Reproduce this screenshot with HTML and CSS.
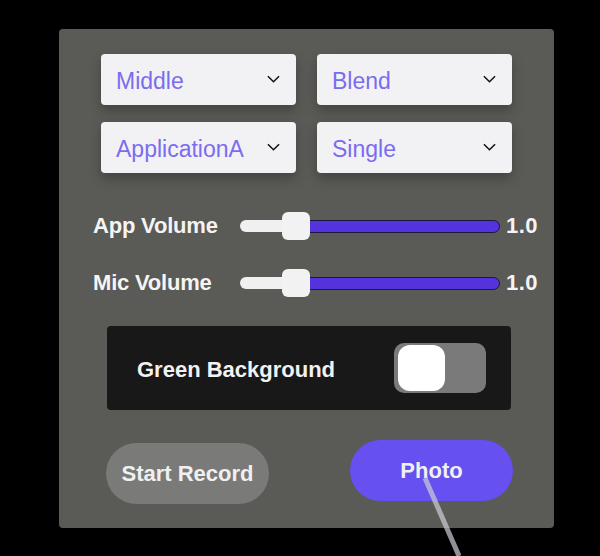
FILE: index.html
```html
<!DOCTYPE html>
<html lang="en">
<head>
    <meta charset="UTF-8" />
    <title>Capture Panel</title>
    <link rel="stylesheet" href="styles.css">
</head>
<body>
    <div class="panel">
        <div class="selects">
            <div class="select"><span>Middle</span><svg class="chev" viewBox="0 0 14 8"><path d="M1 1 L7 7 L13 1"/></svg></div>
            <div class="select"><span>Blend</span><svg class="chev" viewBox="0 0 14 8"><path d="M1 1 L7 7 L13 1"/></svg></div>
            <div class="select"><span>ApplicationA</span><svg class="chev" viewBox="0 0 14 8"><path d="M1 1 L7 7 L13 1"/></svg></div>
            <div class="select"><span>Single</span><svg class="chev" viewBox="0 0 14 8"><path d="M1 1 L7 7 L13 1"/></svg></div>
        </div>

        <div class="sliders">
            <div class="slider-row">
                <div class="slider-label">App Volume</div>
                <div class="track">
                    <div class="fill-left"></div>
                    <div class="thumb"></div>
                    <div class="fill-right"></div>
                </div>
                <div class="slider-value">1.0</div>
            </div>
            <div class="slider-row">
                <div class="slider-label">Mic Volume</div>
                <div class="track">
                    <div class="fill-left"></div>
                    <div class="thumb"></div>
                    <div class="fill-right"></div>
                </div>
                <div class="slider-value">1.0</div>
            </div>
        </div>

        <div class="toggle-card">
            <span>Green Background</span>
            <div class="toggle"><div class="knob"></div></div>
        </div>

        <div class="buttons">
            <button class="btn btn-gray">Start Record</button>
            <button class="btn btn-purple">Photo</button>
        </div>
    </div>

    <!-- controller pointer ray -->
    <svg class="ray" width="600" height="556" viewBox="0 0 600 556">
        <line x1="425" y1="478" x2="459" y2="556" />
    </svg>
</body>
</html>
```

FILE: styles.css
```css
body {
    margin: 0;
    background-color: #000000;
    font-family: "Liberation Sans", Arial, sans-serif;
    width: 600px;
    height: 556px;
    overflow: hidden;
    position: relative;
}

.panel {
    margin: 29px 0 0 59px;
    width: 495px;
    box-sizing: border-box;
    padding: 25px 41px 24px 42px;
    background-color: #5a5a56;
    border-radius: 4px;
}

.selects {
    display: grid;
    grid-template-columns: 195px 195px;
    column-gap: 21px;
    row-gap: 17px;
}

.select {
    height: 51px;
    box-sizing: border-box;
    background-color: #f2f2f4;
    border-radius: 4px;
    display: flex;
    align-items: center;
    justify-content: space-between;
    padding: 4px 16px 0 15px;
    box-shadow: 0 6px 12px rgba(0, 0, 0, 0.25);
    color: #7a6cf0;
    font-size: 23px;
}

.chev {
    width: 13px;
    height: 8px;
    margin-top: -5px;
}

.chev path {
    fill: none;
    stroke: #111111;
    stroke-width: 1.6;
}

.sliders {
    margin: 38px 0 0 -8px;
    width: 447px;
    display: flex;
    flex-direction: column;
    gap: 27px;
}

.slider-row {
    display: flex;
    align-items: center;
    height: 30px;
}

.slider-label {
    width: 147px;
    flex-shrink: 0;
    color: #f4f4f4;
    font-weight: bold;
    font-size: 22px;
    letter-spacing: -0.2px;
}

/* the track with thumb sitting inside */
.track {
    width: 260px;
    flex-shrink: 0;
    display: flex;
    align-items: center;
}

.fill-left {
    width: 44px;
    height: 12px;
    background-color: #f0f0f0;
    border-radius: 6px 0 0 6px;
}

.thumb {
    width: 28px;
    height: 28px;
    background-color: #f2f2f2;
    border-radius: 6px;
    margin: 0 -2px;
    position: relative;
    z-index: 1;
}

.fill-right {
    flex: 1;
    height: 11px;
    background-color: #5433dc;
    border: 1px solid #1c1640;
    border-radius: 0 7px 7px 0;
}

.slider-value {
    margin-left: 6px;
    color: #f4f4f4;
    font-weight: bold;
    font-size: 22px;
    letter-spacing: 0.4px;
}

.toggle-card {
    margin: 28px 0 0 6px;
    width: 404px;
    height: 84px;
    box-sizing: border-box;
    padding: 3px 25px 0 30px;
    background-color: #181818;
    border-radius: 4px;
    display: flex;
    align-items: center;
    justify-content: space-between;
    color: #f2f2f2;
    font-size: 22px;
    font-weight: bold;
}

.toggle {
    width: 92px;
    height: 50px;
    margin-top: -3px;
    background-color: #7a7a7a;
    border-radius: 10px;
    display: flex;
    align-items: center;
    padding-left: 4px;
    box-sizing: border-box;
}

.knob {
    width: 47px;
    height: 46px;
    background-color: #ffffff;
    border-radius: 12px;
}

.buttons {
    margin: 33px 0 0 5px;
    width: 407px;
    display: flex;
    justify-content: space-between;
}

.btn {
    width: 163px;
    height: 61px;
    border: none;
    border-radius: 31px;
    font-family: "Liberation Sans", Arial, sans-serif;
    font-size: 22px;
    font-weight: bold;
    color: #f0f0f0;
}

.btn-gray {
    background-color: #7a7a78;
}

.btn-purple {
    background-color: #6650ef;
    margin-top: -3px;
}

.ray {
    position: absolute;
    left: 0;
    top: 0;
    pointer-events: none;
}

.ray line {
    stroke: rgba(205, 205, 215, 0.7);
    stroke-width: 5;
}
```
